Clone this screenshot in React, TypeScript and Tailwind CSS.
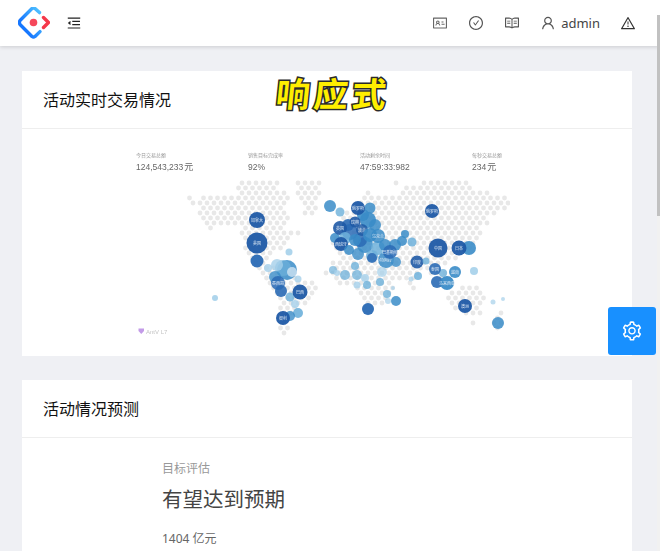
import { AiOutlineCheckCircle, AiOutlineIdcard, AiOutlineMenuFold, AiOutlineRead, AiOutlineSetting, AiOutlineUser, AiOutlineWarning } from 'react-icons/ai';

const cjk = "font-['Noto_Sans','Noto_Sans_CJK_SC',sans-serif]";

// land outline of the dot map, one row every 5px: [y, [x0, x1], ...]
const landRows: number[][][] = [
  [[183], [237, 277], [297, 320], [392, 396], [420, 470]],
  [[188], [237, 280], [297, 322], [405, 472]],
  [[193], [208, 212], [237, 290], [297, 322], [368, 372], [402, 490]],
  [[198], [186, 195], [200, 290], [300, 322], [362, 505]],
  [[203], [190, 197], [200, 290], [302, 318], [358, 508]],
  [[208], [200, 284], [305, 316], [355, 505]],
  [[213], [200, 285], [305, 312], [345, 500]],
  [[218], [202, 240], [236, 288], [340, 490]],
  [[223], [204, 236], [240, 285], [335, 488]],
  [[228], [204, 212], [240, 282], [335, 482]],
  [[233], [242, 300], [335, 482]],
  [[238], [244, 294], [335, 478]],
  [[243], [244, 290], [332, 475]],
  [[248], [244, 286], [335, 470]],
  [[253], [246, 272], [335, 462]],
  [[258], [246, 268], [338, 458]],
  [[263], [250, 268], [330, 445]],
  [[268], [254, 275], [330, 440], [470, 476]],
  [[273], [258, 290], [326, 420], [430, 450]],
  [[278], [264, 300], [330, 420], [435, 455]],
  [[283], [268, 312], [335, 390], [406, 416], [440, 456]],
  [[288], [272, 318], [352, 395], [410, 414], [458, 480]],
  [[293], [274, 316], [358, 392], [450, 486]],
  [[298], [278, 312], [360, 388], [446, 484]],
  [[303], [280, 306], [362, 386], [446, 486]],
  [[308], [280, 300], [362, 376], [450, 482]],
  [[313], [280, 296], [362, 372], [462, 480], [500, 504]],
  [[318], [278, 294], [470, 476], [494, 502]],
  [[323], [278, 290], [472, 478], [492, 504]],
  [[328], [278, 288], [492, 498]],
  [[333], [280, 288]]
];

function landDots() {
  const dots: { x: number; y: number }[] = [];
  landRows.forEach((row, index) => {
    const offset = index % 2 === 0 ? 0 : 3.5;
    row.slice(1).forEach(([start, end]) => {
      for (let x = 186 + offset; x <= end; x += 7) {
        if (x >= start) dots.push({ x, y: row[0][0] });
      }
    });
  });
  return dots;
}

const dark = '#1f5aa6';
const deep = '#2a6ab5';
const mid = '#3a8cc8';
const soft = '#6db0da';
const light = '#a5d0ea';

const bubbles: [number, number, number, string, number, string?][] = [
  [215, 298, 3, light, 0.9],
  [289, 252, 3.5, light, 0.9],
  [257, 261, 6.5, deep, 0.95],
  [257, 220, 8, dark, 0.95, '加拿大'],
  [257, 243, 10.5, dark, 0.95, '美国'],
  [287, 270, 10, mid, 0.85],
  [283, 268, 8, soft, 0.7],
  [277, 265, 6, light, 0.8],
  [268, 268, 4, light, 0.8],
  [292, 272, 5, '#cfe4f3', 0.8],
  [298, 279, 3.5, light, 0.8],
  [275, 277, 6, mid, 0.8],
  [278, 283, 7, deep, 0.85, '墨西哥'],
  [281, 291, 6, deep, 0.9],
  [290, 297, 4.5, soft, 0.8],
  [295, 304, 4, light, 0.8],
  [298, 313, 5, soft, 0.9],
  [290, 316, 5, mid, 0.8],
  [300, 292, 7.5, dark, 0.95, '巴西'],
  [283, 318, 7, dark, 0.95, '智利'],
  [330, 206, 6, mid, 0.85],
  [340, 212, 4.5, soft, 0.8],
  [370, 208, 5.5, mid, 0.85],
  [368, 220, 8, mid, 0.9],
  [363, 215, 6, mid, 0.9],
  [375, 225, 6, mid, 0.85],
  [350, 232, 8, deep, 0.85],
  [348, 225, 6, deep, 0.9],
  [365, 245, 8, mid, 0.85],
  [378, 248, 7, soft, 0.85],
  [360, 240, 7, deep, 0.85],
  [335, 238, 5, mid, 0.85],
  [385, 245, 6, mid, 0.85],
  [358, 208, 7, dark, 0.95, '俄罗斯'],
  [355, 222, 5.5, dark, 0.9, '瑞典'],
  [340, 228, 7, dark, 0.9, '英国'],
  [362, 230, 6, dark, 0.85, '波兰'],
  [370, 235, 7, mid, 0.9],
  [378, 236, 7, mid, 0.85, '乌克兰'],
  [345, 238, 6, soft, 0.85],
  [355, 240, 6, mid, 0.85],
  [341, 244, 7, dark, 0.95, '西班牙'],
  [349, 250, 5, mid, 0.85],
  [358, 254, 6, mid, 0.8],
  [372, 256, 6, soft, 0.85],
  [386, 260, 8, mid, 0.85, '沙特阿拉伯'],
  [372, 258, 5, deep, 0.85],
  [395, 245, 6, mid, 0.85],
  [390, 252, 7, deep, 0.85, '巴基斯坦'],
  [396, 262, 5, mid, 0.8],
  [405, 234, 4, mid, 0.85],
  [412, 242, 4.5, soft, 0.85],
  [402, 241, 5, mid, 0.85],
  [417, 262, 6.5, dark, 0.9, '印度'],
  [426, 261, 3.5, soft, 0.8],
  [418, 276, 4, soft, 0.85],
  [411, 279, 2.5, light, 0.7],
  [333, 270, 4, soft, 0.7],
  [337, 273, 3, light, 0.8],
  [345, 275, 5, soft, 0.75],
  [355, 266, 4, soft, 0.8],
  [357, 275, 5, soft, 0.75],
  [365, 278, 4, light, 0.8],
  [357, 285, 3.5, light, 0.8],
  [367, 285, 4, soft, 0.8],
  [380, 282, 4, soft, 0.8],
  [382, 272, 5, light, 0.7],
  [387, 294, 4, soft, 0.8],
  [393, 288, 2, light, 0.7],
  [396, 301, 5, mid, 0.85],
  [388, 301, 3, light, 0.7],
  [368, 309, 6, deep, 0.95],
  [469, 248, 7, mid, 0.9],
  [459, 248, 7.5, dark, 0.95, '日本'],
  [438, 248, 9.5, dark, 0.95, '中国'],
  [432, 211, 7, dark, 0.95, '俄罗斯'],
  [443, 273, 4, soft, 0.8],
  [455, 272, 6, mid, 0.9, '越南'],
  [435, 269, 6, deep, 0.9, '泰国'],
  [437, 282, 6, deep, 0.9],
  [447, 283, 7, mid, 0.95, '马来西亚'],
  [474, 271, 4, light, 0.9],
  [465, 306, 7, dark, 0.95, '澳洲'],
  [493, 302, 2.5, light, 0.7],
  [503, 299, 2, light, 0.7],
  [498, 323, 6, mid, 0.85]
];

function WorldMap() {
  return (
    <svg viewBox="136 176 374 166" className="block h-[166px] w-[374px] blur-[0.6px]">
      {landDots().map((dot) => (
        <circle key={`${dot.x}-${dot.y}`} cx={dot.x} cy={dot.y} r={2.4} fill="#e8e8e8" />
      ))}
      {bubbles.map(([x, y, r, fill, opacity, label]) => (
        <g key={`${x}-${y}`}>
          <circle cx={x} cy={y} r={r} fill={fill} fillOpacity={opacity} />
          {label && (
            <text x={x} y={y + 1.5} textAnchor="middle" fontSize={4} fill="#dfeaf5" fontFamily="'Noto Sans CJK SC', sans-serif">
              {label}
            </text>
          )}
        </g>
      ))}
      <path d="M138.5 328.5h5.5v2.5l-2.75 3l-2.75-3z" fill="#c39be8" />
      <text x={146} y={333.5} fontSize={6} fill="#c4c4c4" fontFamily="'Liberation Sans', sans-serif">
        AntV L7
      </text>
    </svg>
  );
}

function Stat({ label, value, unit }: { label: string; value: string; unit?: string }) {
  return (
    <div className="font-['Liberation_Sans','Noto_Sans_CJK_SC',sans-serif] text-[#666] blur-[0.25px]">
      <div className="h-[8px] text-[5px] leading-[8px] text-[#999]">{label}</div>
      <div className="mt-[2px] text-[8.5px] leading-[12px] whitespace-nowrap">
        {value}
        {unit && <span className="ml-[1px] text-[9px]">{unit}</span>}
      </div>
    </div>
  );
}

function Logo() {
  return (
    <svg viewBox="0 0 32 32" className="h-[32px] w-[32px]">
      <defs>
        <linearGradient id="logoBlue" x1="0.9" y1="0" x2="0.2" y2="0.6">
          <stop offset="0" stopColor="#4fc0ff" />
          <stop offset="1" stopColor="#1677ff" />
        </linearGradient>
      </defs>
      <path d="M21.5 5.6 L17 1.5 Q15.5 0.6 14 1.5 L2 13.5 Q0.8 15.5 2 17.5 L14 29.5 Q15.5 30.6 17 29.5 L22 24.6" fill="none" stroke="url(#logoBlue)" strokeWidth="3.4" strokeLinecap="round" strokeLinejoin="round" />
      <path d="M25.5 10.5 L30.5 15.5 L25.5 20.5" fill="none" stroke="#f5384a" strokeWidth="3.4" strokeLinecap="round" strokeLinejoin="round" />
      <circle cx="15.5" cy="15.5" r="3.8" fill="#f5475a" />
    </svg>
  );
}

export default function App() {
  return (
    <div className={`relative h-[551px] overflow-hidden bg-[#eff0f4] ${cjk}`}>
      <header className="relative z-10 flex h-[46px] items-center bg-white pl-[18px] pr-[24px] text-[#333] shadow-[0_1px_4px_rgba(0,0,0,0.15)]">
        <Logo />
        <AiOutlineMenuFold size={16} className="ml-[16px] text-[#222]" />
        <div className="ml-auto flex items-center text-[#555]">
          <AiOutlineIdcard size={16} className="text-[#666]" />
          <AiOutlineCheckCircle size={16} className="ml-[20px]" />
          <AiOutlineRead size={16} className="ml-[20px]" />
          <AiOutlineUser size={16} className="ml-[20px]" />
          <span className="ml-[5px] text-[13px] leading-[20px] text-[#444]">admin</span>
          <AiOutlineWarning size={16} className="ml-[20px] text-[#333]" />
        </div>
      </header>

      <main className="px-[22px] pr-[28px] pt-[25px]">
        <section className="relative h-[285px] bg-white">
          <div className="flex h-[58px] items-center border-b border-[#eeeeee] pl-[21px] text-[16px] text-[#111]">活动实时交易情况</div>
          <div className="pt-[22px] pl-[114px]">
            <div className="grid h-[25px] w-[448px] grid-cols-4">
              <Stat label="今日交易总额" value="124,543,233" unit="元" />
              <Stat label="销售目标完成率" value="92%" />
              <Stat label="活动剩余时间" value="47:59:33:982" />
              <Stat label="每秒交易总额" value="234" unit="元" />
            </div>
            <WorldMap />
          </div>
          <div className="absolute left-[254px] top-[1px] -skew-x-6 text-[34px] leading-[44px] font-bold tracking-[4px] whitespace-nowrap text-[#ffee00] [-webkit-text-stroke:3px_#2a2a2a] [paint-order:stroke_fill]">响应式</div>
        </section>

        <section className="mt-[24px] h-[300px] bg-white">
          <div className="flex h-[58px] items-center border-b border-[#eeeeee] pl-[21px] text-[16px] text-[#111]">活动情况预测</div>
          <div className="pt-[21px] pl-[140px]">
            <div className="text-[12px] leading-[20px] text-[#999]">目标评估</div>
            <div className="mt-[4px] text-[20.5px] leading-[32px] text-[#444]">有望达到预期</div>
            <div className="mt-[14px] text-[12px] leading-[20px] text-[#666]">1404 亿元</div>
          </div>
        </section>
      </main>

      <button type="button" className="absolute top-[307px] left-[608px] z-20 flex h-[48px] w-[48px] items-center justify-center rounded-[3px] bg-[#1890ff] text-white">
        <AiOutlineSetting size={22} />
      </button>

      <div className="absolute top-[15px] right-0 z-30 h-[536px] w-[3px] bg-[#f1f1f1]">
        <div className="h-[201px] w-full bg-[#c1c1c1]" />
      </div>
    </div>
  );
}
